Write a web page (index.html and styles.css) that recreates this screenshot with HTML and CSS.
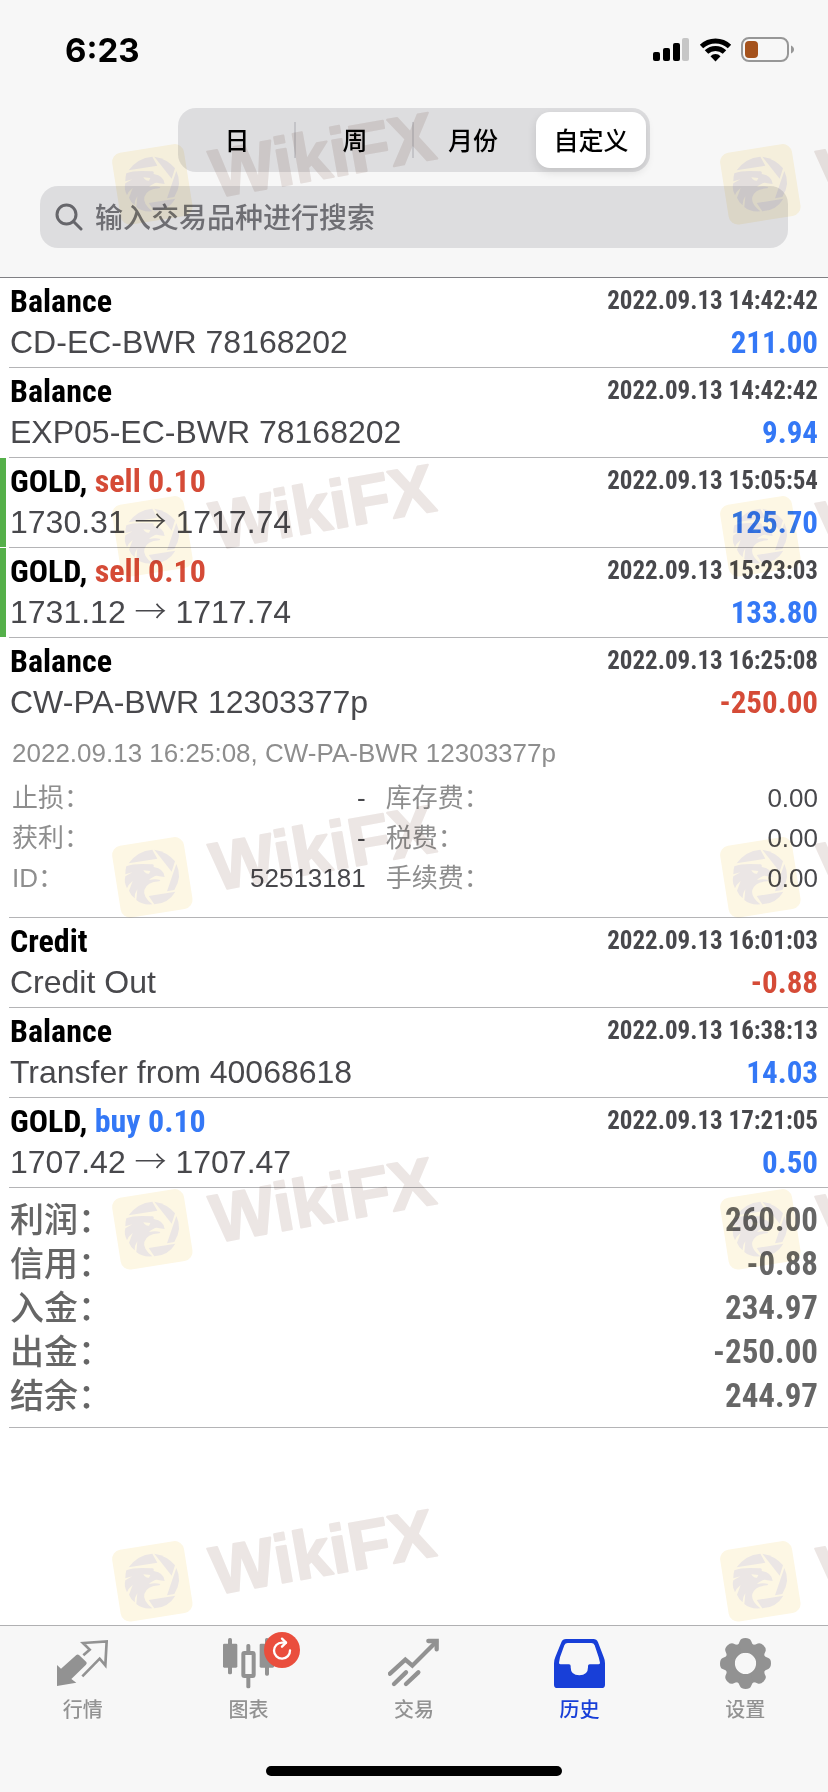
FILE: index.html
```
<!DOCTYPE html>
<html lang="zh-CN">
<head>
<meta charset="utf-8">
<meta name="viewport" content="width=device-width, initial-scale=1">
<title>历史</title>
<link rel="stylesheet" href="styles.css">
</head>
<body>
<div class="app">
  <header class="top">
    <div class="status">
      <span class="clock">6:23</span>
      <svg class="status-icons" viewBox="0 0 142 26" aria-hidden="true">
        <rect x="0" y="15" width="7" height="9" rx="2"/>
        <rect x="10" y="11" width="7" height="13" rx="2"/>
        <rect x="20" y="6" width="7" height="18" rx="2"/>
        <rect x="29" y="1" width="7" height="23" rx="2" fill="#c6c6c6"/>
        <g fill="none" stroke="#000" stroke-width="5">
          <path d="M48.500 9.500a20.500 20.500 0 0 1 28 0"/>
          <path d="M53.500 15a13 13 0 0 1 18 0"/>
        </g>
        <path d="M57.500 19.200a7 7 0 0 1 10 0L62.500 24.500z"/>
        <rect x="89" y="1" width="46" height="23" rx="7" fill="none" stroke="#979797" stroke-width="2"/>
        <rect x="92" y="4" width="13" height="17" rx="4" fill="#a5521c"/>
        <path d="M138 8.500c4 1.500 4 6.500 0 8z" fill="#979797"/>
      </svg>
    </div>
    <div class="segments" role="group" aria-label="时间范围">
      <button type="button" class="segment">日</button>
      <button type="button" class="segment">周</button>
      <button type="button" class="segment">月份</button>
      <button type="button" class="segment selected" aria-pressed="true">自定义</button>
    </div>
    <label class="search">
      <svg class="search-icon" viewBox="0 0 28 28" aria-hidden="true"><circle cx="11.500" cy="11.500" r="9.500"/><path d="M18.500 18.500L26 26"/></svg>
      <input class="search-input" type="search" placeholder="输入交易品种进行搜索" aria-label="输入交易品种进行搜索">
    </label>
  </header>

  <main class="history">
    <ul class="deals">
      <li class="deal">
        <div class="line"><strong class="name">Balance</strong><time class="time">2022.09.13 14:42:42</time></div>
        <div class="line"><span class="note">CD-EC-BWR 78168202</span><span class="amount up">211.00</span></div>
      </li>
      <li class="deal">
        <div class="line"><strong class="name">Balance</strong><time class="time">2022.09.13 14:42:42</time></div>
        <div class="line"><span class="note">EXP05-EC-BWR 78168202</span><span class="amount up">9.94</span></div>
      </li>
      <li class="deal marked">
        <div class="line"><strong class="name">GOLD, <span class="down">sell 0.10</span></strong><time class="time">2022.09.13 15:05:54</time></div>
        <div class="line"><span class="note">1730.31 <span class="arrow">→</span> 1717.74</span><span class="amount up">125.70</span></div>
      </li>
      <li class="deal marked">
        <div class="line"><strong class="name">GOLD, <span class="down">sell 0.10</span></strong><time class="time">2022.09.13 15:23:03</time></div>
        <div class="line"><span class="note">1731.12 <span class="arrow">→</span> 1717.74</span><span class="amount up">133.80</span></div>
      </li>
      <li class="deal">
        <div class="line"><strong class="name">Balance</strong><time class="time">2022.09.13 16:25:08</time></div>
        <div class="line"><span class="note">CW-PA-BWR 12303377p</span><span class="amount down">-250.00</span></div>
        <div class="details">
          <p class="comment">2022.09.13 16:25:08, CW-PA-BWR 12303377p</p>
          <dl class="fields">
            <div class="field"><dt>止损：</dt><dd>-</dd></div>
            <div class="field"><dt>库存费：</dt><dd>0.00</dd></div>
            <div class="field"><dt>获利：</dt><dd>-</dd></div>
            <div class="field"><dt>税费：</dt><dd>0.00</dd></div>
            <div class="field"><dt>ID：</dt><dd>52513181</dd></div>
            <div class="field"><dt>手续费：</dt><dd>0.00</dd></div>
          </dl>
        </div>
      </li>
      <li class="deal">
        <div class="line"><strong class="name">Credit</strong><time class="time">2022.09.13 16:01:03</time></div>
        <div class="line"><span class="note">Credit Out</span><span class="amount down">-0.88</span></div>
      </li>
      <li class="deal">
        <div class="line"><strong class="name">Balance</strong><time class="time">2022.09.13 16:38:13</time></div>
        <div class="line"><span class="note">Transfer from 40068618</span><span class="amount up">14.03</span></div>
      </li>
      <li class="deal">
        <div class="line"><strong class="name">GOLD, <span class="up">buy 0.10</span></strong><time class="time">2022.09.13 17:21:05</time></div>
        <div class="line"><span class="note">1707.42 <span class="arrow">→</span> 1707.47</span><span class="amount up">0.50</span></div>
      </li>
    </ul>
    <dl class="summary">
      <div class="total"><dt>利润：</dt><dd>260.00</dd></div>
      <div class="total"><dt>信用：</dt><dd>-0.88</dd></div>
      <div class="total"><dt>入金：</dt><dd>234.97</dd></div>
      <div class="total"><dt>出金：</dt><dd>-250.00</dd></div>
      <div class="total"><dt>结余：</dt><dd>244.97</dd></div>
    </dl>
  </main>

  <nav class="tabs">
    <div class="tab-row">
      <a class="tab" href="#quotes">
        <svg class="tab-icon" viewBox="0 0 153 153" aria-hidden="true">
          <path d="M0 81L12 92 58 51Q62 48 66 51L88 72Q91 76 87 80L43 123 58 134 0 144z"/>
          <path d="M79 52L98 35 78 15 149 10 145 82 128 62 76 115" fill="none" stroke="currentColor" stroke-width="8"/>
        </svg>
        行情
      </a>
      <a class="tab" href="#charts">
        <span class="icon-wrap">
          <svg class="tab-icon" viewBox="0 0 153 153" aria-hidden="true">
            <rect x="15" y="0" width="12" height="109" rx="5"/><rect x="0" y="17" width="43" height="72" rx="4"/>
            <rect x="70" y="18" width="12" height="28" rx="5"/><rect x="70" y="112" width="12" height="39" rx="5"/>
            <rect x="61" y="45" width="31" height="69" rx="3" fill="none" stroke="currentColor" stroke-width="12"/>
            <rect x="126" y="0" width="12" height="113" rx="5"/><rect x="110" y="17" width="43" height="72" rx="4"/>
          </svg>
          <svg class="badge" viewBox="0 0 108 108" aria-hidden="true">
            <circle cx="54" cy="54" r="54" fill="#ea4e3d"/>
            <g fill="none" stroke="#fff" stroke-width="7" stroke-linecap="round" stroke-linejoin="round"><path d="M78 55A24 24 0 1 1 54 32L66 32"/><path d="M54 20L66 32 54 44"/></g>
          </svg>
        </span>
        图表
      </a>
      <a class="tab" href="#trade">
        <svg class="tab-icon" viewBox="0 0 153 153" aria-hidden="true">
          <g fill="none" stroke="currentColor" stroke-width="13" stroke-linecap="round"><path d="M6 107L52 65 73 83 144 12"/><path d="M121 9H146V34"/><path d="M18 138L54 103"/><path d="M54 138L91 103"/></g>
        </svg>
        交易
      </a>
      <a class="tab active" href="#history" aria-current="page">
        <svg class="tab-icon" viewBox="0 0 153 153" aria-hidden="true">
          <path fill-rule="evenodd" d="M36 3H118Q128 3 132 13L149 57Q153 66 153 76V140Q153 150 143 150H10Q0 150 0 140V76Q0 66 4 57L22 13Q26 3 36 3zM41 15Q34 15 31 22L18 58 15 74Q15 79 20 79H45Q50 79 50 84V88Q50 112 76 112 102 112 102 88V84Q102 79 107 79H133Q138 79 138 74L134 58 122 22Q119 15 112 15z"/>
        </svg>
        历史
      </a>
      <a class="tab" href="#settings">
        <svg class="tab-icon" viewBox="0 0 153 153" aria-hidden="true">
          <defs><path id="tooth" d="M51 22Q57 18 60 8 63 0 76 0T93 8Q96 18 102 22L92 44H61z"/></defs>
          <path fill-rule="evenodd" d="M76.500 16A60.500 60.500 0 1 1 76.500 137 60.500 60.500 0 1 1 76.500 16zM76.500 44A32 32 0 1 0 76.500 108 32 32 0 1 0 76.500 44z"/>
          <use href="#tooth"/><use href="#tooth" transform="rotate(45 76.500 76.500)"/><use href="#tooth" transform="rotate(90 76.500 76.500)"/><use href="#tooth" transform="rotate(135 76.500 76.500)"/><use href="#tooth" transform="rotate(180 76.500 76.500)"/><use href="#tooth" transform="rotate(225 76.500 76.500)"/><use href="#tooth" transform="rotate(270 76.500 76.500)"/><use href="#tooth" transform="rotate(315 76.500 76.500)"/>
        </svg>
        设置
      </a>
    </div>
    <div class="home-bar"></div>
  </nav>

  <svg class="watermarks" aria-hidden="true">
    <defs>
      <symbol id="mark" viewBox="0 0 1080 390">
        <rect x="48" y="135" width="218" height="218" rx="28" transform="rotate(-9 157 244)" fill="#fdf7e4"/>
        <g fill="#ebe6e5">
          <path d="M86 202Q112 165 157 161L172 188z"/>
          <path d="M163 161Q203 168 225 196L215 227z"/>
          <path d="M229 204Q248 242 223 282L201 286z"/>
          <path d="M146 300L226 287Q206 322 163 325z"/>
          <path d="M79 211Q98 204 125 204L158 205Q163 206 161 213 192 218 194 243L178 241Q168 237 160 243 150 248 147 252 166 247 181 252L178 256Q140 258 133 282 128 302 157 325 127 328 109 312L112 280Q103 293 104 307 92 297 87 284L98 255Q84 266 81 277 71 258 76 241L97 229 76 235Q76 222 79 211zM130 223Q136 234 147 233L151 225z" fill-rule="evenodd"/>
        </g>
        <text class="mark-text" x="346" y="284" transform="rotate(-10 346 284)">WikiFX</text>
      </symbol>
    </defs>
    <use href="#mark" x="100" y="103" width="360" height="130"/><use href="#mark" x="708" y="103" width="360" height="130"/>
    <use href="#mark" x="100" y="455" width="360" height="130"/><use href="#mark" x="708" y="455" width="360" height="130"/>
    <use href="#mark" x="100" y="796" width="360" height="130"/><use href="#mark" x="708" y="796" width="360" height="130"/>
    <use href="#mark" x="100" y="1148" width="360" height="130"/><use href="#mark" x="708" y="1148" width="360" height="130"/>
    <use href="#mark" x="100" y="1500" width="360" height="130"/><use href="#mark" x="708" y="1500" width="360" height="130"/>
  </svg>
</div>
</body>
</html>
```
FILE: styles.css
```
* { box-sizing: border-box; }
body, ul, dl, dd, p { margin: 0; padding: 0; }
body {
  background: #fff;
  color: #48484c;
  font-family: "Liberation Sans", "Noto Sans CJK SC", sans-serif;
}
.app {
  position: relative;
  display: flex;
  flex-direction: column;
  min-height: 100vh;
}
.top {
  display: flex;
  flex-direction: column;
  align-items: center;
  padding-bottom: 29px;
  background: #f7f7f7;
  border-bottom: 1px solid #808084;
}
.status {
  display: flex;
  justify-content: space-between;
  align-items: center;
  align-self: stretch;
  height: 100px;
  padding: 0 33px 0 65px;
}
.clock {
  color: #000;
  font: 700 33px/40px Inter, sans-serif;
}
.status-icons { width: 142px; height: 26px; }

.segments {
  display: grid;
  grid-template-columns: repeat(4, 1fr);
  width: 57%;
  height: 64px;
  margin: 8px 0 14px;
  border-radius: 18px;
  background: #dddddf;
}
.segment {
  display: flex;
  align-items: center;
  justify-content: center;
  padding: 0 0 2px;
  border: 0;
  background: linear-gradient(#c4c4c8, #c4c4c8) right center / 2px 36px no-repeat;
  color: #000;
  font: 500 25px/36px "Noto Sans CJK SC", sans-serif;
}
.segment:nth-child(3) { background: none; }
.segment.selected {
  margin: 4px;
  border-radius: 14px;
  background: #fff;
  box-shadow: 0 4px 10px rgba(0, 0, 0, 0.12);
}
.search {
  display: flex;
  align-items: center;
  gap: 12px;
  width: calc(100% - 80px);
  height: 62px;
  padding: 0 15px;
  border-radius: 18px;
  background: #dddddf;
}
.search-icon {
  width: 28px;
  height: 28px;
  fill: none;
  stroke: #66666b;
  stroke-width: 3;
  stroke-linecap: round;
}
.search-input {
  flex: 1;
  min-width: 0;
  padding: 0 0 2px;
  border: 0;
  outline: 0;
  background: none;
  color: #000;
  font: 500 28px/40px "Noto Sans CJK SC", sans-serif;
}
.search-input::placeholder { color: #6e6e73; opacity: 1; }

.history { flex: 1; }
.deals { list-style: none; }
.deal {
  padding: 3px 10px 5px;
  border-bottom: 1px solid #b4b4b6;
  border-image: linear-gradient(to right, transparent 10px, #b4b4b6 10px) 1;
}
.marked { background: linear-gradient(#55b04a, #55b04a) left / 6px 100% no-repeat padding-box; }
.line {
  display: flex;
  justify-content: space-between;
  height: 40px;
  line-height: 40px;
  white-space: nowrap;
}
.line + .line { margin-top: 1px; }
.name, .time, .amount, .total dd { font-family: "Roboto Condensed", Roboto, sans-serif; font-weight: 700; }
.name { color: #000; font-size: 32px; }
.time { font-size: 25px; }
.note { font-size: 32px; }
.amount { font-size: 31px; line-height: 42px; }
.arrow { font-family: "Noto Sans CJK SC", sans-serif; font-weight: 300; line-height: 1; }
.up { color: #3478f6; }
.down { color: #d54b37; }

.details { padding: 11px 0 14px 2px; font-size: 26px; line-height: 40px; }
.comment { color: #8e8e8e; margin-bottom: 5px; }
.fields {
  display: grid;
  grid-template-columns: 9fr 11fr;
  column-gap: 20px;
}
.field { display: flex; justify-content: space-between; height: 40px; }
.field dt { color: #8e8e8e; }

.summary {
  padding: 10px 10px 9px;
  border-bottom: 1px solid;
  border-image: linear-gradient(to right, transparent 10px, #b4b4b6 10px) 1;
  color: #666;
}
.total { display: flex; justify-content: space-between; height: 44px; line-height: 44px; }
.total dt { font-size: 34px; font-weight: 500; }
.total dd { font-size: 33px; }

.tabs {
  position: relative;
  padding-bottom: 16px;
  background: #f7f7f7;
  border-top: 1px solid #b0b0b2;
}
.tab-row { display: grid; grid-template-columns: repeat(5, 1fr); }
.tab {
  display: flex;
  flex-direction: column;
  align-items: center;
  gap: 5px;
  padding-top: 12px;
  color: #929292;
  font: 500 20px/30px "Noto Sans CJK SC", sans-serif;
  text-decoration: none;
}
.active { color: #183fd8; }
.tab-icon { display: block; width: 51px; height: 51px; fill: currentColor; }
.icon-wrap { position: relative; }
.badge { position: absolute; top: -6px; right: -26px; width: 36px; height: 36px; }
.home-bar {
  width: 296px;
  height: 10px;
  margin: 42px auto 0;
  border-radius: 5px;
  background: #000;
}

.watermarks {
  position: absolute;
  inset: 0;
  width: 100%;
  height: 100%;
  overflow: hidden;
  pointer-events: none;
  mix-blend-mode: multiply;
}
.mark-text {
  fill: #ece6e4;
  stroke: #ece6e4;
  stroke-width: 6px;
  stroke-linejoin: round;
  font: 700 204px "Liberation Sans", sans-serif;
}
```
